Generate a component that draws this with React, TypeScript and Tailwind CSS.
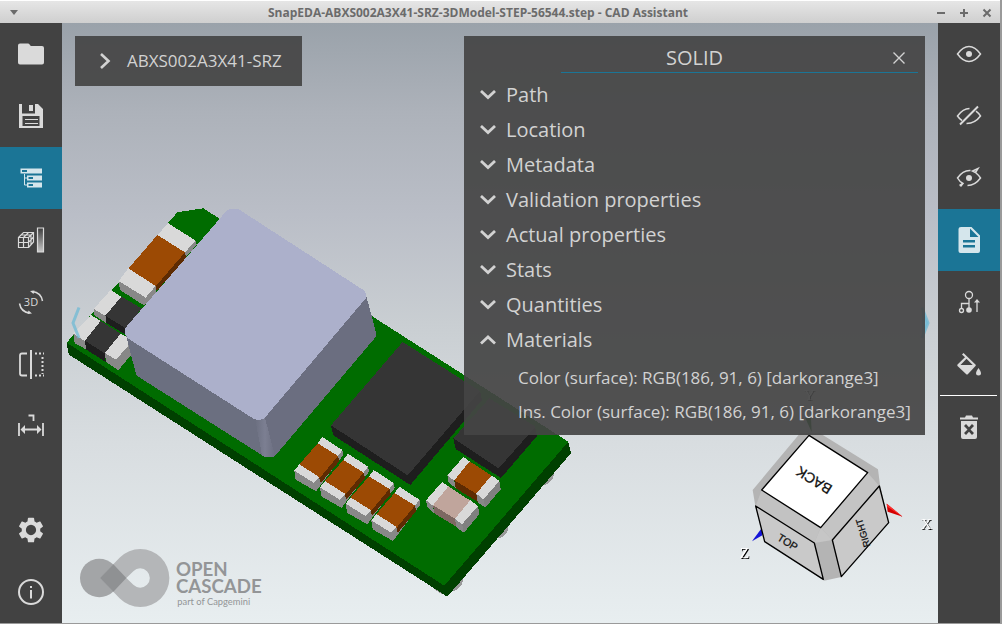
import { useState, type ReactNode } from "react";

function Icon({ children }: { children: ReactNode }) {
  return (
    <svg width="36" height="36" viewBox="0 0 36 36" fill="none" aria-hidden="true">
      {children}
    </svg>
  );
}

const EYE = "M6.500 18C10.500 12.500 14 10.500 18 10.500S25.500 12.500 29.500 18C25.500 23.500 22 25.500 18 25.500S10.500 23.500 6.500 18Z";

const icons = {
  folder: (
    <Icon>
      <path d="M5 9.500Q5 7.500 7 7.500H15Q16 7.500 16.600 8.400L17.800 10H29Q31 10 31 12V26.500Q31 28.500 29 28.500H7Q5 28.500 5 26.500Z" fill="currentColor" />
    </Icon>
  ),
  save: (
    <Icon>
      <path fillRule="evenodd" d="M6 6H9V15.500H22V6H25L30 11V30H6ZM9.500 18V28H26.500V18Z" fill="currentColor" />
      <path d="M16 7H20V13H16Z" fill="currentColor" />
      <path d="M12 21.500H25M12 25.500H25" stroke="currentColor" strokeWidth="1.200" />
    </Icon>
  ),
  tree: (
    <Icon>
      <path fillRule="evenodd" d="M7.500 8.500H29V13.500H7.500ZM9 10V12H14V10ZM14 15.500H29V20.500H14ZM15.500 17V19H20V17ZM14 22.500H29V27.500H14ZM15.500 24V26H20V24Z" fill="currentColor" />
      <path d="M11.500 14V25H14M11.500 18H14" stroke="currentColor" />
    </Icon>
  ),
  explode: (
    <Icon>
      <defs>
        <linearGradient id="bar" x2="0" y2="1">
          <stop stopColor="#3c3c3c" />
          <stop offset="1" stopColor="#c8c8c8" />
        </linearGradient>
      </defs>
      <path d="M5.500 15.500H15.500V25.500H5.500ZM10.500 15.500V25.500M5.500 20.500H15.500L20.500 15M5.500 15.500L10.500 10.500H20.500V20L15.500 25.500M15.500 15.500L20.500 10.500M10.500 15.500L15.500 10.500M8 13H18V22.500" stroke="currentColor" strokeWidth="1.200" />
      <path d="M24.500 6H30.500V30H24.500Z" fill="url(#bar)" stroke="currentColor" strokeWidth="1.200" />
    </Icon>
  ),
  rotate: (
    <Icon>
      <text x="18" y="22" textAnchor="middle" fontSize="11" fontFamily="Open Sans, sans-serif" fill="currentColor">3D</text>
      <path d="M19.500 7.500Q28 8.500 29.500 17M16.500 29Q8 28 6.500 19.500" stroke="currentColor" strokeWidth="1.500" />
      <path d="M17 7L21.500 6.500L20.500 10ZM19 29.500L14.500 30L15.500 26.500Z" fill="currentColor" />
    </Icon>
  ),
  section: (
    <Icon>
      <path d="M14 7.500H9Q7 7.500 7 9.500V27.500Q7 29.500 9 29.500H14" stroke="currentColor" strokeWidth="1.800" />
      <path d="M18 4V33" stroke="currentColor" strokeWidth="2" />
      <path d="M22 7.500H31M22 29.500H31M29.500 11V28" stroke="currentColor" strokeWidth="2" strokeDasharray="2 2" />
    </Icon>
  ),
  measure: (
    <Icon>
      <path d="M6 15V28M30 15V28M9 21.500H27M15.500 7.500H20.500V13" stroke="currentColor" strokeWidth="1.800" />
      <path d="M7.500 21.500L12 17V26ZM28.500 21.500L24 17V26Z" fill="currentColor" />
    </Icon>
  ),
  gear: (
    <Icon>
      <path fillRule="evenodd" transform="translate(2.600 2.600) scale(1.283)" d="M19.140 12.940c.04-.3.06-.61.06-.94 0-.32-.02-.64-.07-.94l2.030-1.580c.18-.14.23-.41.12-.61l-1.920-3.320c-.12-.22-.37-.29-.59-.22l-2.390.96c-.5-.38-1.030-.7-1.620-.94l-.36-2.540c-.04-.24-.24-.41-.48-.41h-3.840c-.24 0-.43.17-.47.41l-.36 2.540c-.59.24-1.130.57-1.620.94l-2.390-.96c-.22-.08-.47 0-.59.22L2.740 8.870c-.12.21-.08.47.12.61l2.030 1.580c-.05.3-.09.63-.09.94s.02.64.07.94l-2.030 1.580c-.18.14-.23.41-.12.61l1.920 3.320c.12.22.37.29.59.22l2.390-.96c.5.38 1.030.7 1.620.94l.36 2.540c.05.24.24.41.48.41h3.840c.24 0 .44-.17.47-.41l.36-2.540c.59-.24 1.130-.56 1.620-.94l2.390.96c.22.08.47 0 .59-.22l1.920-3.320c.12-.22.07-.47-.12-.61l-2.010-1.580zM12 16a4 4 0 1 1 0-8 4 4 0 0 1 0 8z" fill="currentColor" />
    </Icon>
  ),
  info: (
    <Icon>
      <circle cx="18" cy="18" r="12" stroke="currentColor" strokeWidth="2" />
      <path d="M18 16V24.500M18 12V14" stroke="currentColor" strokeWidth="2" />
    </Icon>
  ),
  show: (
    <Icon>
      <path d={EYE} stroke="currentColor" strokeWidth="1.500" />
      <circle cx="18" cy="18" r="3" fill="currentColor" />
    </Icon>
  ),
  hide: (
    <Icon>
      <path d="M18.500 10.500Q12 10.500 6.500 18Q8.500 21 11 22.500M25 13.200Q27.500 15 29.500 18Q24 25.500 15.500 25.400" stroke="currentColor" strokeWidth="1.500" />
      <path d="M9 26.500L27 8.500" stroke="currentColor" strokeWidth="1.900" />
    </Icon>
  ),
  isolate: (
    <Icon>
      <path d="M19.500 10.500Q12 10 6.500 18Q8.500 21.500 12 23.500L9.500 26.500M8.500 25.500L12 23.500M24.500 12.500Q27.500 15 29.500 18Q24 25.500 16.500 25.500M24.500 12.500L21.500 11L27 8.500L24.500 12.500" stroke="currentColor" strokeWidth="1.500" />
      <circle cx="18" cy="18" r="3" fill="currentColor" />
    </Icon>
  ),
  document: (
    <Icon>
      <path fillRule="evenodd" d="M10 5H20.500L29 13.500V29Q29 31 27 31H9.500Q7.500 31 7.500 29V7Q7.500 5 10 5ZM19 6.500V15H27.500ZM12 18V20.500H24V18ZM12 23V25.500H24V23Z" fill="currentColor" />
    </Icon>
  ),
  parent: (
    <Icon>
      <path d="M18 14.500V24M18 19.500H10.500V24.500M26 28V18" stroke="currentColor" strokeWidth="1.300" />
      <path d="M23 18.500L26 15L29 18.500Z" fill="currentColor" />
      <circle cx="18" cy="11" r="3.500" stroke="currentColor" strokeWidth="1.300" />
      <circle cx="10.500" cy="26.500" r="2" stroke="currentColor" strokeWidth="1.300" />
      <circle cx="18" cy="26" r="2.800" fill="currentColor" />
    </Icon>
  ),
  paint: (
    <Icon>
      <path fillRule="evenodd" d="M11 8.500L12.500 7L24.700 18.800Q25 19.500 24.500 20L17 28Q16 29 15 28L6.500 20Q6 19 6.500 18.500L14 11.300ZM15.500 12.800L9.500 19H21.700Z" fill="currentColor" />
      <path d="M27.500 22Q30 25.500 30 27A2.500 2.500 0 0 1 25 27Q25 25.500 27.500 22Z" fill="currentColor" />
    </Icon>
  ),
  trash: (
    <Icon>
      <path d="M9 8.500H14L15 6.500H21L22 8.500H27V10.500H9Z" fill="currentColor" />
      <path fillRule="evenodd" d="M10 12H26V28Q26 30 24 30H12Q10 30 10 28ZM13 17L16.500 20.500L13 24L15 26L18 22.700L21 26L23 24L19.500 20.500L23 17L21 15L18 18.300L15 15Z" fill="currentColor" />
    </Icon>
  ),
};

function Tool({ label, icon, active = false }: { label: string; icon: ReactNode; active?: boolean }) {
  return (
    <button
      type="button"
      aria-label={label}
      aria-pressed={active}
      className={
        active
          ? "flex h-[62px] w-full shrink-0 items-center justify-center bg-[#1b7596] text-[#d5e6ec]"
          : "flex h-[62px] w-full shrink-0 items-center justify-center text-[#dadada]"
      }
    >
      {icon}
    </button>
  );
}

function P({ d, c }: { d: string; c: string }) {
  return <polygon points={d} fill={c} />;
}

const LIGHT = "#d9d9d9";
const SHADE = "#888888";
const COPPER = "#9c4a04";
const COPPER_DARK = "#5e2b02";
const CHIP = "#353535";
const CHIP_DARK = "#1e1e1e";

function SmallCapacitor() {
  return (
    <>
      <P d="187,389 190,405 122,495 108,514 102,488 119,470" c={SHADE} />
      <P d="174,407 178,424 122,489 118,474" c={COPPER_DARK} />
      <P d="43,452 102,488 108,514 47,479" c={SHADE} />
      <P d="127,351 187,390 174,408 113,370" c={LIGHT} />
      <P d="113,370 174,408 118,475 58,433" c={COPPER} />
      <P d="58,433 119,472 102,489 43,452" c={LIGHT} />
    </>
  );
}

function TiltedPart({ top, side }: { top: string; side: string }) {
  return (
    <>
      <P d="502,466 523,482 527,505 506,487" c={SHADE} />
      <P d="523,480 590,520 594,546 527,505" c={side} />
      <P d="589,520 610,537 616,563 593,547" c={SHADE} />
      <P d="610,537 658,482 662,508 616,563" c="#808080" />
      <P d="550,411 569,424 523,482 502,466" c={LIGHT} />
      <P d="569,424 635,467 589,521 523,481" c={top} />
      <P d="635,466 658,483 610,538 589,521" c={LIGHT} />
    </>
  );
}

function Scene() {
  return (
    <svg
      className="absolute inset-0 h-full w-full"
      viewBox="62 23 876 600"
      preserveAspectRatio="xMidYMid slice"
      role="img"
      aria-label="3D model of a power module board"
    >
      <defs>
        <linearGradient id="sky" x2="0" y2="1">
          <stop stopColor="#9aa2aa" />
          <stop offset="0.150" stopColor="#adb2ba" />
          <stop offset="0.320" stopColor="#babec7" />
          <stop offset="0.500" stopColor="#c9ced2" />
          <stop offset="0.700" stopColor="#d8dde0" />
          <stop offset="1" stopColor="#e8eef0" />
        </linearGradient>
        <linearGradient id="edge">
          <stop stopColor="#6b6f80" />
          <stop offset="0.500" stopColor="#7c7f92" />
          <stop offset="1" stopColor="#6b6e80" />
        </linearGradient>
      </defs>
      <rect x="62" y="23" width="876" height="600" fill="url(#sky)" />

      <g transform="translate(280 320) scale(.33333)" fill="#999999" shapeRendering="crispEdges">
        <ellipse cx="800" cy="472" rx="26" ry="17" transform="rotate(-50 800 472)" />
        <ellipse cx="664" cy="631" rx="26" ry="17" transform="rotate(-50 664 631)" />
        <ellipse cx="527" cy="790" rx="26" ry="17" transform="rotate(-50 527 790)" />
        <ellipse cx="478" cy="811" rx="20" ry="6" transform="rotate(32 478 811)" />
      </g>

      <g shapeRendering="crispEdges">
        <P d="66.700,342.700 68.700,354.500 447.300,596.700 571,453.300 568.300,441.700 444.300,582" c="#004000" />
        <P d="66.700,342.700 74,334 80,332 91,314 97,310 106,300 112,290 119,282 126,278 173,227 168,223 177.300,212.300 203.300,208.300 568.300,441.700 444.300,585.700" c="#006c00" />
      </g>

      <g transform="translate(60 200) scale(.33333)" shapeRendering="crispEdges">
        <P d="407,122 410,135 376,172 375,156" c={SHADE} />
        <P d="375,156 378,175 290,273 287,258" c={COPPER_DARK} />
        <P d="176,243 257,292 287,258 290,278 253,317 180,270" c={SHADE} />
        <P d="325,70 407,122 375,157 292,105" c={LIGHT} />
        <P d="292,105 375,157 287,259 205,206" c={COPPER} />
        <P d="205,205 287,258 257,293 176,243" c={LIGHT} />

        <P d="101,327 137,347 137,368 104,347" c={SHADE} />
        <P d="137,346 197,383 200,406 137,368" c={CHIP_DARK} />
        <P d="152,270 184,290 137,348 101,327" c={LIGHT} />
        <P d="184,290 245,325 197,385 136,347" c={CHIP} />

        <P d="40,401 75,423 78,448 44,430" c={SHADE} />
        <P d="75,422 135,459 137,486 78,448" c={CHIP_DARK} />
        <P d="135,458 168,478 212,425 212,466 175,511 138,486" c={SHADE} />
        <P d="93,345 122,363 75,424 40,401" c={LIGHT} />
        <P d="122,363 182,401 135,461 75,422" c={CHIP} />
        <P d="182,401 207,415 204,438 168,479 135,459" c={LIGHT} />

        <path d="M195 395L228 522Q230 528 238 532L608 767L625 730L600 655Z" fill="#6b6f80" />
        <path d="M918 285L945 385Q950 400 948 410L645 768L620 720L610 655Z" fill="#6b6e80" />
        <path d="M585 655L606 766Q625 778 645 768L614 650Z" fill="url(#edge)" />
        <path d="M500 32Q518 22 538 29L910 270Q922 280 919 293L613 655Q597 664 580 656L205 416Q191 402 195 385Z" fill="#acb0cb" />
      </g>

      <g transform="translate(280 320) scale(.33333)" shapeRendering="crispEdges">
        <P d="153,316 383,465 600,213 606,240 391,495 160,346" c={CHIP_DARK} />
        <P d="368,66 600,213 383,466 153,316" c={CHIP} />
        <P d="520,355 656,444 765,318 771,348 663,474 527,387" c={CHIP_DARK} />
        <P d="520,355 628,235 767,320 656,445" c={CHIP} />
        <SmallCapacitor />
        <g transform="translate(77 50)"><SmallCapacitor /></g>
        <g transform="translate(154 99)"><SmallCapacitor /></g>
        <g transform="translate(231 149)"><SmallCapacitor /></g>
        <TiltedPart top={COPPER} side={COPPER_DARK} />
        <g transform="translate(-64 75)"><TiltedPart top="#c0a59c" side="#7d6862" /></g>
      </g>

      <g fill="none" stroke="#6fb9d4" strokeOpacity="0.750" strokeWidth="3">
        <path d="M79 307.500L73 323L79 338" />
        <path d="M922 307.500L928 323L922 338" fill="#6fb9d4" fillOpacity="0.750" />
      </g>

      <g transform="translate(720 380) scale(.33333)">
        <P d="500,371 548,410 503,395" c="#d40000" />
        <P d="500,371 548,410 502,380" c="#ff3030" />
        <P d="127,442 96,484 127,466" c="#1414d8" />
        <P d="256,114 273,114 275,156" c="#006000" />
        <path d="M240 160L300 160L474 268L480 315L506 428L364 591L312 602L135 485L106 378L98 330Z" fill="#b4b4b4" />
        <P d="125,330 302,443 283,489 107,378" c="#c2c2c2" />
        <P d="443,278 478,318 337,480 302,443" c="#c4c4c4" />
        <P d="302,443 337,480 283,489" c="#c6c6c6" />
        <g stroke="#000000" strokeWidth="4" strokeLinejoin="round">
          <polygon points="267,166 443,278 302,443 125,330" fill="#ffffff" />
          <polygon points="107,378 283,489 310,598 134,485" fill="#c9c9c9" />
          <polygon points="478,318 506,428 364,590 337,480" fill="#c9c9c9" />
        </g>
        <g fontFamily="Liberation Sans, sans-serif" fill="#111111" stroke="#111111" strokeWidth="0.800" textAnchor="middle">
          <text transform="translate(290 288) rotate(212)" fontSize="43">BACK</text>
          <text transform="translate(197 496) rotate(32)" fontSize="32">TOP</text>
          <text transform="translate(438 456) rotate(-107)" fontSize="28">RIGHT</text>
        </g>
        <g fontFamily="Liberation Serif, serif" fontSize="46" fill="#ffffff" className="drop-shadow-[3px_3px_0_#000000]">
          <text x="59" y="533">Z</text>
          <text x="602" y="446">X</text>
          <text x="251" y="59">Y</text>
        </g>
      </g>

      <g transform="translate(0 480) scale(.33333)">
        <circle cx="298" cy="294" r="58" fill="#a3a5a7" />
        <path fillRule="evenodd" d="M300 294L359.500 232.500A87 87 0 1 1 359.500 355.500ZM379 294L400 314.500A29 29 0 1 0 400 273.500Z" fill="#b4b6b8" />
        <path d="M300 294L340 252.500L379 294L340 335.500Z" fill="#8f9193" />
        <text fill="#939597" fontFamily="Lato, sans-serif" fontSize="56" fontWeight="700">
          <tspan x="528" y="289">OPEN</tspan>
          <tspan x="528" y="339">CASCADE</tspan>
          <tspan x="532" y="374" fontSize="28" fontWeight="400">part of Capgemini</tspan>
        </text>
      </g>
    </svg>
  );
}

function Chevron({ up = false }: { up?: boolean }) {
  return (
    <svg width="16" height="10" viewBox="0 0 16 10" fill="none" stroke="currentColor" strokeWidth="2.800" aria-hidden="true">
      <path d={up ? "M1 8.500L8 2L15 8.500" : "M1 1L8 7.500L15 1"} />
    </svg>
  );
}

const sections = [
  "Path",
  "Location",
  "Metadata",
  "Validation properties",
  "Actual properties",
  "Stats",
  "Quantities",
  "Materials",
];

const materials = [
  "Color (surface): RGB(186, 91, 6) [darkorange3]",
  "Ins. Color (surface): RGB(186, 91, 6) [darkorange3]",
];

function Properties() {
  const [open, setOpen] = useState("Materials");
  return (
    <section aria-label="Properties" className="w-[461px] bg-[#444444]/92 pb-1.5 text-[#d2d2d2]">
      <header className="grid grid-cols-[90px_1fr_90px] pr-[7px] pl-[7px]">
        <h2 className="col-start-2 row-start-1 pt-2 text-center text-xl leading-7">SOLID</h2>
        <div className="col-start-2 col-end-4 row-start-1 flex justify-end border-b border-[#1b7596] pr-[11px]">
          <button type="button" aria-label="Close" className="flex h-9 w-4 items-end justify-center pb-2">
            <svg width="12" height="12" viewBox="0 0 12 12" stroke="currentColor" strokeWidth="1.400" aria-hidden="true">
              <path d="M0.500 0.500L11.500 11.500M11.500 0.500L0.500 11.500" />
            </svg>
          </button>
        </div>
      </header>
      <ul className="pt-1">
        {sections.map((name) => (
          <li key={name}>
            <button
              type="button"
              aria-expanded={open === name}
              onClick={() => setOpen(open === name ? "" : name)}
              className="flex h-[35px] w-full items-center gap-2.5 px-4 text-left text-xl"
            >
              <Chevron up={open === name} />
              {name}
            </button>
            {name === "Materials" && open === name && (
              <ul className="pt-1">
                {materials.map((line) => (
                  <li key={line} className="flex h-[34px] items-center pl-[54px] text-[17px]">
                    {line}
                  </li>
                ))}
              </ul>
            )}
          </li>
        ))}
      </ul>
    </section>
  );
}

export default function App() {
  return (
    <div className="flex h-screen flex-col overflow-hidden border-r-2 border-b border-[#9a9a9a] bg-[#424242] font-['Open_Sans',sans-serif]">
      <header className="flex h-[23px] shrink-0 items-center border-t border-white bg-linear-to-b from-[#e6e6e6] to-[#cfcfcf] px-2 pt-px text-[#6b6b6b]">
        <button type="button" aria-label="Window menu" className="flex w-16 pl-0.5">
          <svg width="8" height="5" viewBox="0 0 8 5" aria-hidden="true"><path d="M0 0H8L4 5Z" fill="currentColor" /></svg>
        </button>
        <h1 className="flex-1 truncate pr-11 text-center text-xs font-bold">
          SnapEDA-ABXS002A3X41-SRZ-3DModel-STEP-56544.step - CAD Assistant
        </h1>
        <div className="flex w-16 items-center justify-between pl-2">
          {[
            { label: "Minimize", d: "M1 5H9" },
            { label: "Maximize", d: "M1 5H9M5 1V9" },
            { label: "Close window", d: "M1.500 1.500L8.500 8.500M8.500 1.500L1.500 8.500" },
          ].map(({ label, d }) => (
            <button key={label} type="button" aria-label={label}>
              <svg width="10" height="10" viewBox="0 0 10 10" stroke="currentColor" strokeWidth="2" aria-hidden="true"><path d={d} /></svg>
            </button>
          ))}
        </div>
      </header>

      <div className="flex min-h-0 flex-1">
        <nav aria-label="Tools" className="flex w-[62px] shrink-0 flex-col bg-[#424242]">
          <Tool label="Open" icon={icons.folder} />
          <Tool label="Save" icon={icons.save} />
          <Tool label="Model tree" icon={icons.tree} active />
          <Tool label="Display mode" icon={icons.explode} />
          <Tool label="Projection" icon={icons.rotate} />
          <Tool label="Clipping" icon={icons.section} />
          <Tool label="Measure" icon={icons.measure} />
          <div className="flex-1" />
          <Tool label="Settings" icon={icons.gear} />
          <Tool label="About" icon={icons.info} />
        </nav>

        <main className="relative min-w-0 flex-1 overflow-hidden">
          <Scene />
          <div className="relative flex items-start justify-between p-[13px]">
            <button type="button" className="flex h-[50px] items-center gap-4 bg-[#444444]/92 pr-5 pl-6 text-[17px] text-[#d2d2d2]">
              <svg width="12" height="16" viewBox="0 0 12 16" fill="none" stroke="currentColor" strokeWidth="2.600" aria-hidden="true">
                <path d="M2 1L9.500 8L2 15" />
              </svg>
              ABXS002A3X41-SRZ
            </button>
            <Properties />
          </div>
        </main>

        <nav aria-label="Selection" className="flex w-[62px] shrink-0 flex-col bg-[#424242]">
          <Tool label="Show" icon={icons.show} />
          <Tool label="Hide" icon={icons.hide} />
          <Tool label="Show only" icon={icons.isolate} />
          <Tool label="Properties" icon={icons.document} active />
          <Tool label="Select parent" icon={icons.parent} />
          <Tool label="Appearance" icon={icons.paint} />
          <hr className="mr-[3px] ml-0.5 border-white" />
          <Tool label="Delete" icon={icons.trash} />
        </nav>
      </div>
    </div>
  );
}
